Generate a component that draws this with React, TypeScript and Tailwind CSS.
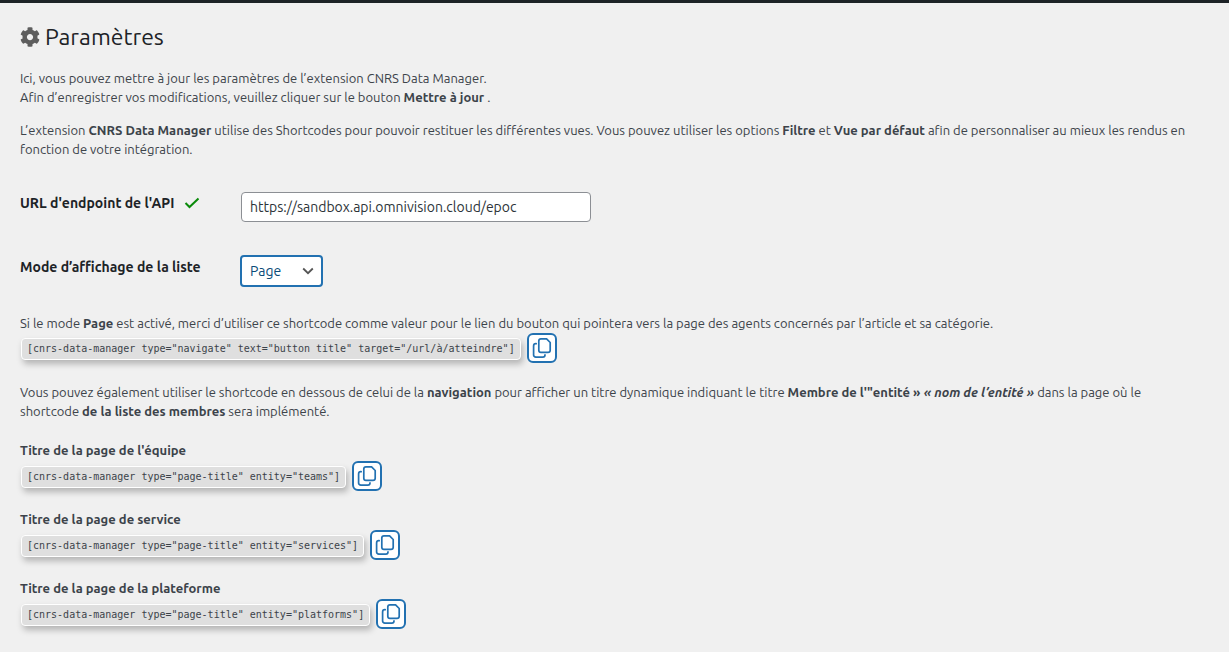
import { FaCog } from 'react-icons/fa';

function CheckIcon() {
  return (
    <svg viewBox="0 0 16 12" className="h-3 w-4 shrink-0 fill-none stroke-[#0a8a0a] stroke-2" role="img" aria-label="Valide">
      <path d="M1.500 6l4 4L14.500 1.500" />
    </svg>
  );
}

function CopyIcon() {
  return (
    <svg viewBox="0 0 20 20" className="size-5 shrink-0 fill-none stroke-[#2271b1]" strokeWidth="1.700" strokeLinecap="round" strokeLinejoin="round" aria-hidden="true">
      <path d="M9 .9h5.600l3.600 3.600v7.700a2.200 2.200 0 0 1-2.200 2.200H9a2.200 2.200 0 0 1-2.200-2.200V3.100A2.200 2.200 0 0 1 9 .9z" />
      <path d="M4.200 5.700h-.4A2.200 2.200 0 0 0 1.600 7.900v9a2.200 2.200 0 0 0 2.200 2.200h7a2.200 2.200 0 0 0 2.200-2.200" />
    </svg>
  );
}

function Shortcode({ children }: { children: string }) {
  return (
    <div className="flex items-center gap-1.5 pl-px">
      <code className="mt-px rounded-[4px] border border-white bg-[#dfdfdf] px-[5px] font-['DejaVu_Sans_Mono',monospace] text-[10px] leading-5 shadow-[2px_4px_6px_rgba(0,0,0,0.25)]">
        {children}
      </code>
      <button
        type="button"
        aria-label="Copier le shortcode"
        className="flex size-[30px] shrink-0 items-center justify-center rounded-[6px] border-2 border-[#2271b1] bg-white"
      >
        <CopyIcon />
      </button>
    </div>
  );
}

function TitleShortcode({ title, entity }: { title: string; entity: string }) {
  return (
    <section>
      <h2 className="pb-px font-bold">{title}</h2>
      <Shortcode>{`[cnrs-data-manager type="page-title" entity="${entity}"]`}</Shortcode>
    </section>
  );
}

export default function App() {
  return (
    <div className="min-h-screen border-t-3 border-[#1d2327] bg-[#f0f0f0] pt-[18px] pr-8 pb-4 pl-5 font-[Ubuntu,'Open_Sans',sans-serif] text-[13px] leading-[19px] text-[#3c434a]">
      <h1 className="flex items-center gap-[5px] text-[23px] leading-8 text-[#1d2327]">
        <FaCog className="size-5 text-[#5d5d5d]" aria-hidden="true" />
        Paramètres
      </h1>

      <p className="mt-4">
        Ici, vous pouvez mettre à jour les paramètres de l’extension CNRS Data Manager.
        <br />
        Afin d’enregistrer vos modifications, veuillez cliquer sur le bouton <b>Mettre à jour</b> .
      </p>
      <p className="mt-3.5">
        L’extension <b>CNRS Data Manager</b> utilise des Shortcodes pour pouvoir restituer les différentes vues. Vous
        pouvez utiliser les options <b>Filtre</b> et <b>Vue par défaut</b> afin de personnaliser au mieux les rendus en
        fonction de votre intégration.
      </p>

      <form className="mt-[33px] grid grid-cols-[220px_1fr] gap-y-[33px] text-sm text-[#1d2327]">
        <label htmlFor="endpoint" className="flex items-center gap-2.5 self-start pt-px font-bold">
          URL d'endpoint de l'API
          <CheckIcon />
        </label>
        <div className="flex">
          <input
            id="endpoint"
            type="text"
            defaultValue="https://sandbox.api.omnivision.cloud/epoc"
            className="mx-px h-[30px] w-full max-w-[350px] rounded-[4px] border border-[#8c8f94] bg-white px-2 text-[#2c3338]"
          />
        </div>
        <label htmlFor="mode" className="self-start pt-0.5 font-bold">
          Mode d’affichage de la liste
        </label>
        <div className="relative w-[83px]">
          <select
            id="mode"
            className="block h-8 w-full appearance-none rounded-[4px] border-2 border-[#2271b1] bg-white px-2 text-[#0a4b78]"
          >
            <option>Page</option>
          </select>
          <svg viewBox="0 0 12 8" className="pointer-events-none absolute top-3 right-[9px] h-2 w-3 fill-none stroke-[#555]" strokeWidth="1.800" aria-hidden="true">
            <path d="M1.200 1.500L6 6.200l4.800-4.700" />
          </svg>
        </div>
      </form>

      <p className="mt-[27px]">
        Si le mode <b>Page</b> est activé, merci d’utiliser ce shortcode comme valeur pour le lien du bouton qui
        pointera vers la page des agents concernés par l’article et sa catégorie.
      </p>
      <Shortcode>{'[cnrs-data-manager type="navigate" text="button title" target="/url/à/atteindre"]'}</Shortcode>

      <p className="mt-5">
        Vous pouvez également utiliser le shortcode en dessous de celui de la <b>navigation</b> pour afficher un titre
        dynamique indiquant le titre <b>Membre de l'"entité » <i>« nom de l’entité »</i></b> dans la page où le
        shortcode <b>de la liste des membres</b> sera implémenté.
      </p>

      <div className="mt-5 flex flex-col gap-[19px]">
        <TitleShortcode title="Titre de la page de l'équipe" entity="teams" />
        <TitleShortcode title="Titre de la page de service" entity="services" />
        <TitleShortcode title="Titre de la page de la plateforme" entity="platforms" />
      </div>
    </div>
  );
}
